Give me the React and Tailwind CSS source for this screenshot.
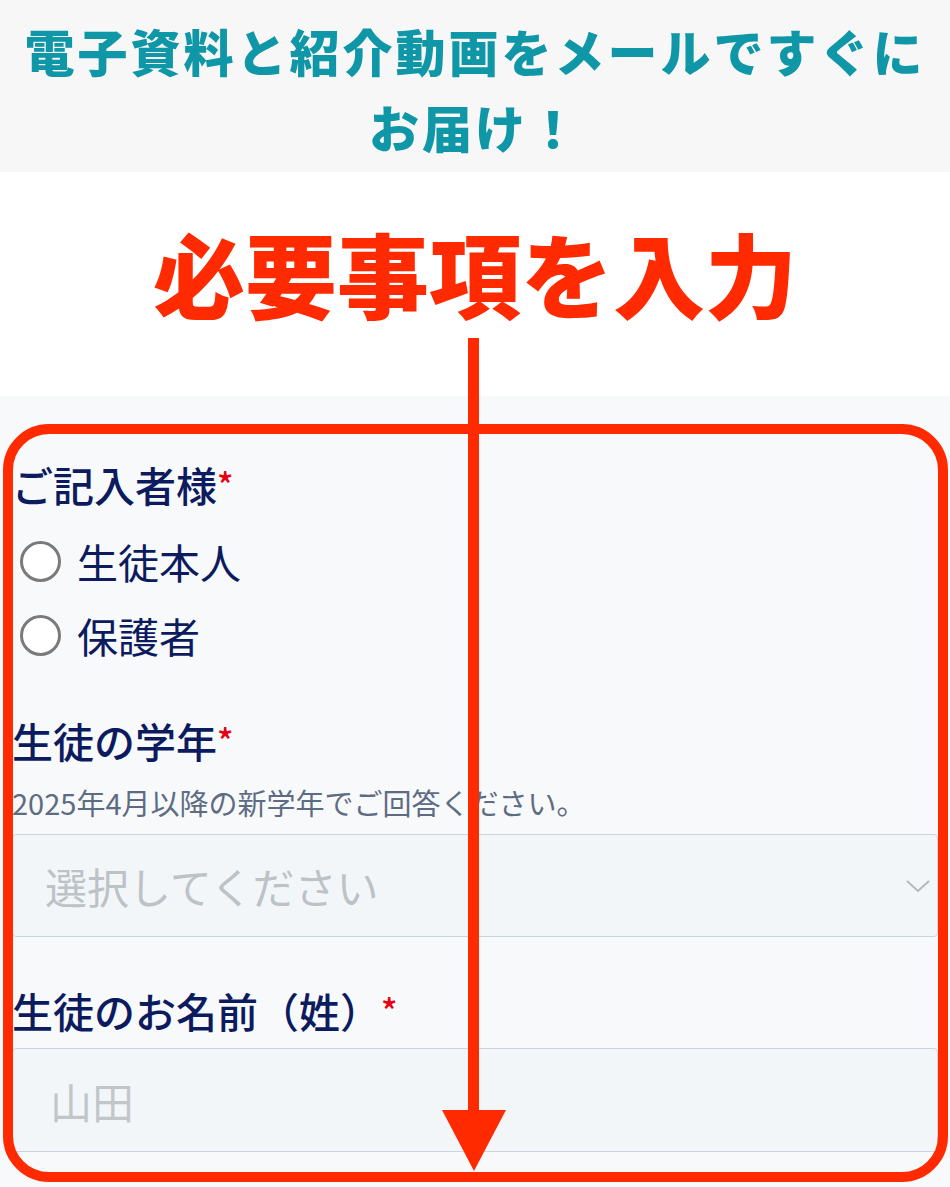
import React from "react";

const jp = { fontFamily: '"Noto Sans CJK JP", "Noto Sans", sans-serif' };

function Label({ children }) {
  return (
    <div className="text-[41px] leading-[50px] font-medium text-[#0c1b5e]">
      {children}
    </div>
  );
}

function Star() {
  return <span className="text-[#e60012] text-[34px] align-top">*</span>;
}

function Radio({ label }) {
  return (
    <div className="flex items-center h-[74px]">
      <span className="ml-[8px] w-[41px] h-[41px] rounded-full border-[3px] border-[#7a7a7a] bg-white shrink-0" />
      <span className="ml-[16px] text-[41px] leading-[50px] text-[#0c1b5e]">{label}</span>
    </div>
  );
}

export default function App() {
  return (
    <div className="relative w-[950px] h-[1187px] overflow-hidden bg-white" style={jp}>
      {/* Title band */}
      <div className="h-[172px] bg-[#f7f7f7] pt-[12px] text-center">
        <div className="text-[50px] leading-[76px] font-black text-[#0f97a7] tracking-[3px]">
          電子資料と紹介動画をメールですぐに
          <br />
          お届け！
        </div>
      </div>

      {/* Instruction band */}
      <div className="h-[224px] bg-white pt-[50px]">
        <div className="text-center text-[92px] leading-[100px] font-black text-[#ff2a00] tracking-[0px]">
          必要事項を入力
        </div>
      </div>

      {/* Form */}
      <div className="bg-[#f8f9fb] h-[791px] px-[12px] pt-[63px]">
        <Label>
          ご記入者様<Star />
        </Label>
        <div className="mt-[15px]">
          <Radio label="生徒本人" />
          <Radio label="保護者" />
        </div>

        <div className="mt-[43px]">
          <Label>
            生徒の学年<Star />
          </Label>
        </div>
        <div className="mt-[17px] text-[29px] leading-[40px] text-[#5d6c83]">
          2025年4月以降の新学年でご回答ください。
        </div>
        <div className="mt-[12px] h-[103px] bg-[#f3f6f9] border border-[#cbd4de] rounded-[4px] flex items-center justify-between pl-[32px] pr-[6px]">
          <span className="text-[42px] text-[#bdc2c7]">選択してください</span>
          <svg width="26" height="16" viewBox="0 0 26 16" fill="none">
            <path d="M2 3 L13 13 L24 3" stroke="#b5b9be" strokeWidth="2" />
          </svg>
        </div>

        <div className="mt-[48px]">
          <Label>
            生徒のお名前（姓）<Star />
          </Label>
        </div>
        <div className="mt-[13px] h-[104px] bg-[#f3f6f9] border border-[#cbd4de] rounded-[4px] flex items-center pl-[37px]">
          <span className="text-[42px] text-[#c3c6c9]">山田</span>
        </div>
      </div>

      {/* Red overlay frame */}
      <div className="absolute left-[3px] top-[424px] w-[945px] h-[758px] border-[10px] border-[#ff2a00] rounded-[46px] pointer-events-none" />

      {/* Arrow */}
      <div className="absolute left-[468px] top-[338px] w-[11px] h-[776px] bg-[#ff2a00]" />
      <svg className="absolute left-[442px] top-[1110px]" width="64" height="62" viewBox="0 0 64 62">
        <polygon points="0,0 64,0 32,61" fill="#ff2a00" />
      </svg>
    </div>
  );
}
